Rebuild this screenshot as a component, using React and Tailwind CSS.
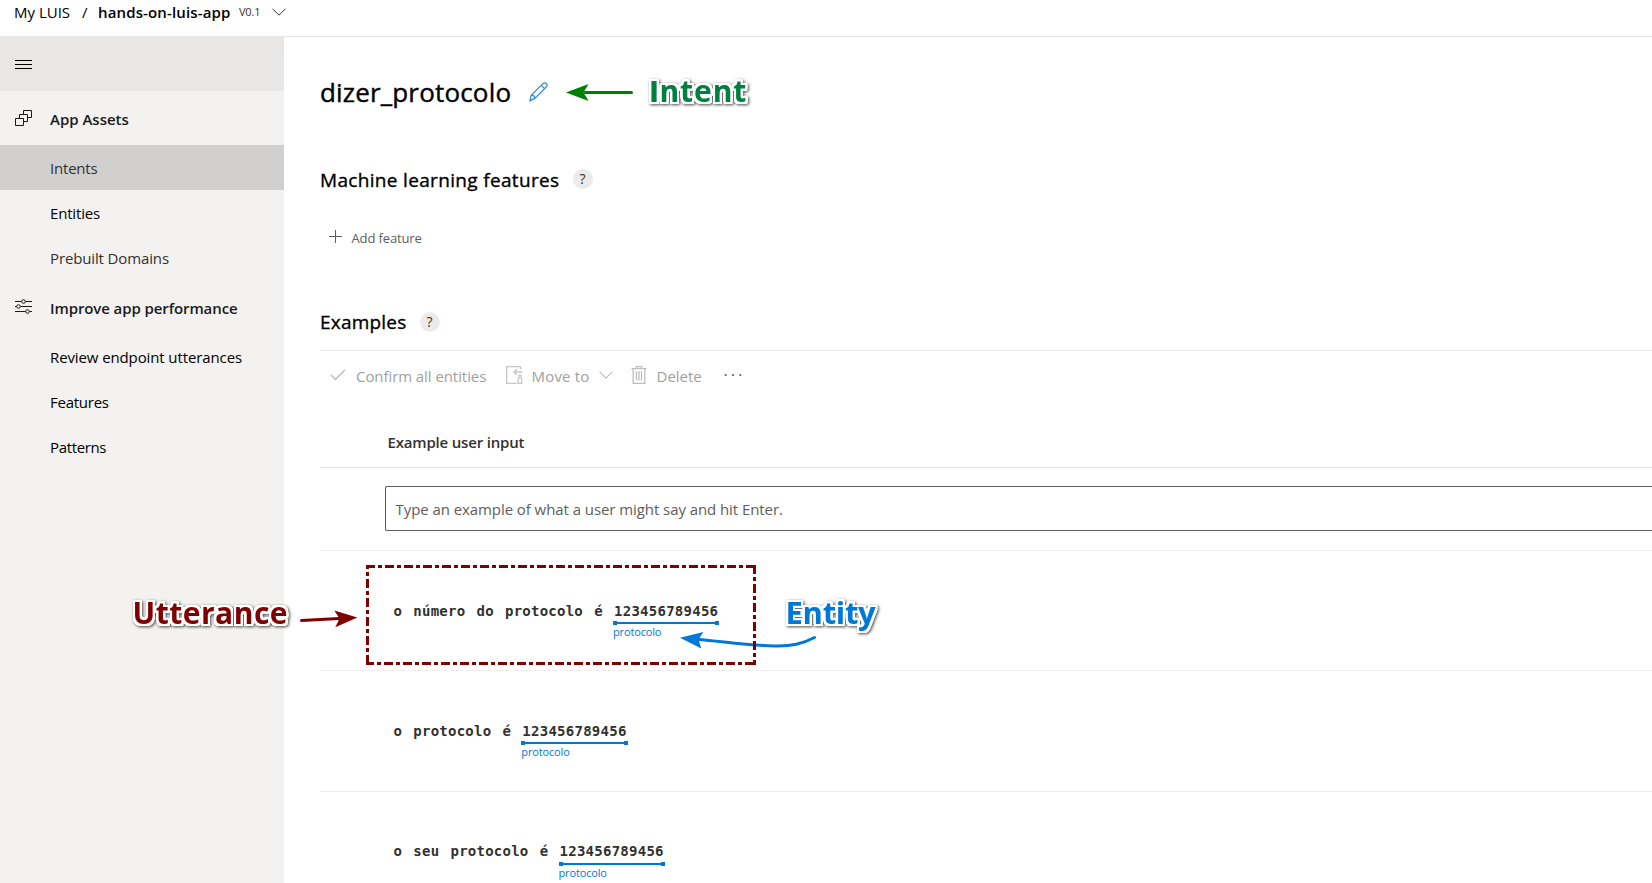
import React from "react";

function ChevronDown({ className }) {
  return (
    <svg width="14" height="8" viewBox="0 0 14 8" fill="none" stroke="currentColor" className={className}>
      <path d="M0.5 0.7 L7 7.2 L13.5 0.7" />
    </svg>
  );
}

function Header() {
  return (
    <header className="h-[37px] shrink-0 border-b border-[#e5e5e5] bg-white pl-[14px] text-[15px] text-black">
      <div className="flex h-6 items-center leading-6">
        <span className="w-[68px]">My LUIS</span>
        <span className="w-4">/</span>
        <span className="w-[141px] font-semibold tracking-[0.14px]">hands-on-luis-app</span>
        <span className="w-[33px] text-[11px] tracking-[-0.2px] text-[#323130]">V0.1</span>
        <ChevronDown className="text-[#323130]" />
      </div>
    </header>
  );
}

function NavHeading({ icon, children, className = "" }) {
  return (
    <div className="flex h-[54px] items-center pl-[15px] font-semibold text-[#1b1a19]">
      <span className="w-[35px] pb-px">{icon}</span>
      <span className={"pt-[2px] " + className}>{children}</span>
    </div>
  );
}

function NavItem({ children, className = "" }) {
  return <div className={"flex h-[45px] items-center pt-px pl-[50px] " + className}>{children}</div>;
}

function Sidebar() {
  return (
    <nav className="flex w-[284px] shrink-0 flex-col bg-[#f3f2f1] text-[15px] text-black">
      <div className="flex h-[54px] items-center bg-[#e8e7e5] pl-[15px]">
        <svg width="17" height="11" viewBox="0 0 17 11" fill="#000">
          <path d="M0 1h17v1H0zM0 5h17v1H0zM0 9h17v1H0z" />
        </svg>
      </div>
      <NavHeading
        className="tracking-[-0.01px]"
        icon={
          <svg width="17" height="17" viewBox="0 0 17 17" fill="none" stroke="#1b1a19" className="mt-px">
            <path d="M0.5 8.5h8v7h-8zM4.5 8.5v-4h8v7h-4M8.5 4.5v-4h8v7h-4" />
          </svg>
        }
      >
        App Assets
      </NavHeading>
      <NavItem className="bg-[#d2d0ce] tracking-[-0.2px] text-[#323130]">Intents</NavItem>
      <NavItem className="tracking-[-0.17px]">Entities</NavItem>
      <NavItem className="tracking-[-0.13px] text-[#323130]">Prebuilt Domains</NavItem>
      <NavHeading
        className="tracking-[-0.1px]"
        icon={
          <svg width="17" height="15" viewBox="0 0 17 15" fill="none" stroke="#1b1a19">
            <path d="M0 2.5h6.5M10.5 2.5H17M0 7.5h1.5M5.5 7.5H17M0 12.5h10.5M14.5 12.5H17" />
            <circle cx="8.5" cy="2.5" r="1.8" />
            <circle cx="3.5" cy="7.5" r="1.8" />
            <circle cx="12.5" cy="12.5" r="1.8" />
          </svg>
        }
      >
        Improve app performance
      </NavHeading>
      <NavItem className="tracking-[-0.11px]">Review endpoint utterances</NavItem>
      <NavItem className="tracking-[-0.25px]">Features</NavItem>
      <NavItem className="tracking-[-0.35px]">Patterns</NavItem>
    </nav>
  );
}

function HelpBadge({ className }) {
  return (
    <span
      className={"flex h-5 w-5 items-center justify-center rounded-full bg-[#edebe9] pr-px text-[14px] leading-none font-medium text-[#323130] " + className}
    >
      ?
    </span>
  );
}

function Toolbar() {
  return (
    <div className="mt-[14px] flex h-[51px] shrink-0 items-center border-t border-[#edebe9] text-[15px] text-[#a19f9d]">
      <svg width="16" height="12" viewBox="0 0 16 12" fill="none" stroke="#bebcba" strokeWidth="1.4" className="mb-[2px] ml-[10px]">
        <path d="M0.8 5.8 L5.3 10.5 L15 0.8" />
      </svg>
      <span className="ml-[10px] w-[150px] tracking-[-0.07px]">Confirm all entities</span>
      <svg width="17" height="18" viewBox="0 0 17 18" fill="none" stroke="#c8c6c4" strokeWidth="1.3" className="mb-[2px]">
        <path d="M14.5 3.5V0.7H0.7v16.6h9.8M8.2 6h8.1M10.8 3.2L8 6l2.8 2.8" />
        <path d="M12 17.3v-3.6l1-1.5V9.5h2v2.7l.8 1.5v3.6z" />
      </svg>
      <span className="ml-[8.5px] w-[67.5px] tracking-[0.2px]">Move to</span>
      <ChevronDown className="mb-[3px] text-[#a19f9d]" />
      <svg width="16" height="18" viewBox="0 0 16 18" fill="none" stroke="#c0bebc" strokeWidth="1.3" className="mb-[2px] ml-[18px]">
        <path d="M0.5 2.7h15M5.3 2.7V0.7h5.4v2M2.2 2.7v14.6h11.6V2.7M5.5 5.2v9.3M8 5.2v9.3M10.5 5.2v9.3" />
      </svg>
      <span className="ml-[9.5px] w-[67.5px]">Delete</span>
      <svg width="18" height="4" viewBox="0 0 18 4" fill="#605e5c" className="mb-[3px]">
        <circle cx="1.7" cy="2" r="1.1" />
        <circle cx="9" cy="2" r="1.1" />
        <circle cx="16.3" cy="2" r="1.1" />
      </svg>
    </div>
  );
}

function Utterance({ words, entity, label, className, gapClass = "" }) {
  return (
    <div className={"flex gap-[11.2px] border-b border-[#f0efee] pl-[73.5px] " + className}>
      {words.map((word, i) => (
        <span key={i} className="h-5 font-['DejaVu_Sans_Mono',monospace] text-[14px] leading-5 font-bold tracking-[0.23px] text-[#323130]">
          {word}
        </span>
      ))}
      <div className="flex flex-col">
        <span className="font-['DejaVu_Sans_Mono',monospace] text-[14px] leading-5 font-bold tracking-[0.26px] text-[#323130]">{entity}</span>
        <span className={"-mr-[1px] -ml-[1px] flex h-1 items-center justify-between " + gapClass}>
          <span className="h-1 w-1 bg-[#0078d7]" />
          <span className="h-[2px] flex-1 bg-[#0078d7]" />
          <span className="h-1 w-1 bg-[#0078d7]" />
        </span>
        <span className="-ml-px text-[11px] leading-[14px] tracking-[-0.15px] text-[#0078d7]">{label}</span>
      </div>
    </div>
  );
}

function Main() {
  return (
    <main className="flex min-w-0 flex-1 flex-col overflow-hidden bg-white pt-[35px] pl-9">
      <div className="flex h-10 shrink-0 items-center">
        <h1 className="w-[191px] text-[26px] leading-10 font-medium tracking-[0.17px] text-black [-webkit-text-stroke:0.4px_black]">dizer_protocolo</h1>
        <svg width="19" height="20" viewBox="0 0 19 20" fill="none" stroke="#2b88d8" strokeWidth="1.2" strokeLinejoin="round" className="ml-[18px]">
          <path d="M0.8 18.9 L2.3 13.2 L13.9 1.6 C15 0.5 16.4 0.6 17.3 1.5 C18.3 2.5 18.3 3.9 17.2 5 L5.9 16.4 Z" />
          <path d="M2.3 13.2 C4.2 13.2 5.8 14.6 5.9 16.4 M12.3 3.3 L15.6 6.6" />
        </svg>
      </div>
      <div className="mt-[54px] flex h-7 shrink-0 items-center text-black">
        <h2 className="w-[253px] text-[19px] leading-7 font-medium tracking-[0.33px] [-webkit-text-stroke:0.35px_black]">Machine learning features</h2>
        <HelpBadge className="mb-[2px]" />
      </div>
      <div className="mt-[34px] flex h-5 shrink-0 items-center pl-[9px] text-[13px] leading-5 tracking-[-0.13px] text-[#605e5c]">
        <svg width="13" height="13" viewBox="0 0 13 13" fill="#605e5c" className="mr-[9.5px] mb-[3px]">
          <path d="M0 6h13v1H0zM6 0h1v13H6z" />
        </svg>
        Add feature
      </div>
      <div className="mt-[60px] flex h-7 shrink-0 items-center text-black">
        <h2 className="w-[100px] text-[19px] leading-7 font-medium tracking-[0.2px] [-webkit-text-stroke:0.35px_black]">Examples</h2>
        <HelpBadge />
      </div>
      <Toolbar />
      <div className="h-[67px] shrink-0 border-b border-[#e6e4e2] pt-[31px] pl-[67.5px] text-[15px] leading-5 font-semibold tracking-[-0.18px] text-[#323130]">
        Example user input
      </div>
      <div className="h-[83px] shrink-0 border-b border-[#f0efee] pt-[18px] pl-[65px]">
        <div className="flex h-[45px] items-center rounded-l-[2px] border border-r-0 border-[#605e5c] pt-px pl-[9.5px] text-[15px] tracking-[-0.07px] text-[#605e5c]">
          Type an example of what a user might say and hit Enter.
        </div>
      </div>
      <Utterance className="h-[120px] shrink-0 pt-[50px]" words={["o", "número", "do", "protocolo", "é"]} entity="123456789456" label="protocolo" />
      <Utterance className="h-[121px] shrink-0 pt-[50px]" words={["o", "protocolo", "é"]} entity="123456789456" label="protocolo" />
      <Utterance className="h-[121px] shrink-0 pt-[49px]" gapClass="mt-px" words={["o", "seu", "protocolo", "é"]} entity="123456789456" label="protocolo" />
    </main>
  );
}

function Callout({ children, className }) {
  return (
    <span
      className={
        "absolute font-bold whitespace-nowrap leading-10 [filter:drop-shadow(2px_0_0_white)_drop-shadow(-2px_0_0_white)_drop-shadow(0_2px_0_white)_drop-shadow(0_-2px_0_white)_drop-shadow(0_0_0.7px_white)_drop-shadow(0_0_0.7px_white)_drop-shadow(1.5px_1.5px_1.5px_rgba(0,0,0,0.7))] " +
        className
      }
    >
      {children}
    </span>
  );
}

function Annotations() {
  return (
    <div className="pointer-events-none absolute inset-0">
      <svg width="1652" height="883" viewBox="0 0 1652 883" fill="none" className="absolute inset-0">
        <g stroke="#0078d7" strokeWidth="3" strokeLinecap="round">
          <path d="M698 639.5 C720 641 745 645.3 775 646 C792 646.4 802 644 814.5 637.5" />
        </g>
        <path d="M680 637.7 L703.3 632 L698.5 639.5 L701.3 648.5 Z" fill="#0078d7" />
        <g stroke="#800000" strokeWidth="3" strokeDasharray="9 3 4 3">
          <path d="M366 566.5 H756" />
          <path d="M754.5 565 V665" />
          <path d="M367.5 565 V665" strokeDashoffset="5" />
          <path d="M366 663.5 H756" strokeDashoffset="1" />
        </g>
        <path d="M585 92.5 H631.5" stroke="#008000" strokeWidth="3" strokeLinecap="round" />
        <path d="M566 92.5 L588.6 84 L583.5 92.5 L588.6 101 Z" fill="#008000" />
        <path d="M301.5 620.6 L339 618.5" stroke="#800000" strokeWidth="3" strokeLinecap="round" />
        <path d="M357.3 617.5 L334.3 610.5 L339.5 618.5 L335.3 627.3 Z" fill="#800000" />
      </svg>
      <Callout className="top-[71px] left-[649.5px] text-[30px] tracking-[0.9px] text-[#008040]">
        <span className="font-['Roboto',sans-serif] font-black">I</span>ntent
      </Callout>
      <Callout className="top-[593px] left-[132.5px] text-[30px] tracking-[0.5px] text-[#800000]">Utterance</Callout>
      <Callout className="top-[592px] left-[785.5px] text-[31px] tracking-[-0.3px] text-[#0078d7]">Entity</Callout>
    </div>
  );
}

export default function App() {
  return (
    <div className="relative flex h-[883px] w-[1652px] flex-col overflow-hidden bg-white font-['Open_Sans','Noto_Sans',sans-serif]">
      <Header />
      <div className="flex min-h-0 flex-1">
        <Sidebar />
        <Main />
      </div>
      <Annotations />
    </div>
  );
}
